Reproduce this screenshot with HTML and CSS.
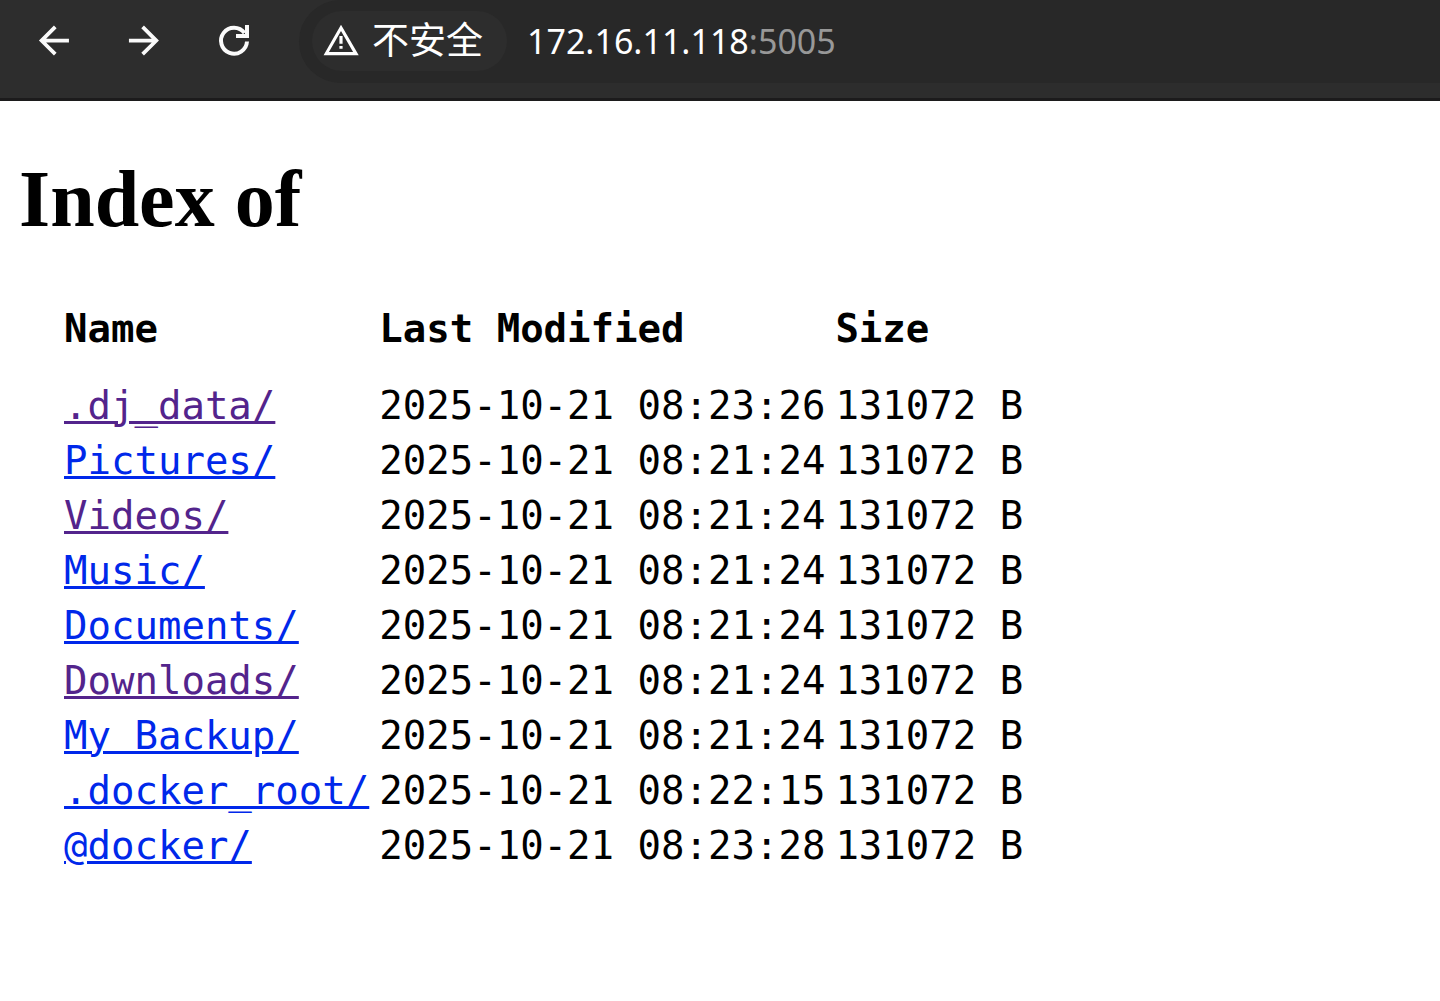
FILE: index.html
```html
<!DOCTYPE html>
<html lang="zh-CN">
<head>
<meta charset="utf-8">
<title>Index of</title>
<link rel="stylesheet" href="styles.css">
</head>
<body>
<header class="toolbar">
  <nav class="nav">
    <button class="nav-button" type="button" aria-label="Back"><svg class="nav-icon" viewBox="0 0 24 24"><path fill="currentColor" d="M19.700 11H7.530l5.590-5.590L11.700 4l-8 8 8 8 1.410-1.410L7.530 13H19.700z"/></svg></button>
    <button class="nav-button" type="button" aria-label="Forward"><svg class="nav-icon" viewBox="0 0 24 24"><path fill="currentColor" d="M3.700 11h12.170l-5.590-5.590L11.700 4l8 8-8 8-1.410-1.410L15.870 13H3.700z"/></svg></button>
    <button class="nav-button" type="button" aria-label="Reload"><svg class="nav-icon" viewBox="0 0 45 45" fill="none" stroke="currentColor" stroke-width="4"><path d="M35 23.5A13 13 0 1 1 32.5 15"/><path d="M35 7V18H24"/></svg></button>
  </nav>
  <div class="omnibox">
    <button class="chip" type="button"><svg class="chip-icon" viewBox="0 0 24 24"><path fill="currentColor" d="M12 5.700L19.630 19H4.370L12 5.700M12 1.700L1 21h22.200L12 1.700zm1 13.500h-2v1.700h2v-1.700zm0-6.400h-2v5h2v-5z"/></svg><span class="chip-label">不安全</span></button>
    <div class="address" role="textbox" aria-label="Address" contenteditable="true" spellcheck="false">172.16.11.118<span class="port">:5005</span></div>
  </div>
</header>
<main class="page">
  <h1 class="title">Index of</h1>
  <table class="listing">
    <thead><tr><th scope="col">Name</th><th scope="col">Last Modified</th><th scope="col">Size</th></tr></thead>
    <tbody>
      <tr><td><a class="visited" href="#dj_data">.dj_data/</a></td><td>2025-10-21 08:23:26</td><td>131072 B</td></tr>
      <tr><td><a href="#pictures">Pictures/</a></td><td>2025-10-21 08:21:24</td><td>131072 B</td></tr>
      <tr><td><a class="visited" href="#videos">Videos/</a></td><td>2025-10-21 08:21:24</td><td>131072 B</td></tr>
      <tr><td><a href="#music">Music/</a></td><td>2025-10-21 08:21:24</td><td>131072 B</td></tr>
      <tr><td><a href="#documents">Documents/</a></td><td>2025-10-21 08:21:24</td><td>131072 B</td></tr>
      <tr><td><a class="visited" href="#downloads">Downloads/</a></td><td>2025-10-21 08:21:24</td><td>131072 B</td></tr>
      <tr><td><a href="#backup">My Backup/</a></td><td>2025-10-21 08:21:24</td><td>131072 B</td></tr>
      <tr><td><a href="#docker_root">.docker_root/</a></td><td>2025-10-21 08:22:15</td><td>131072 B</td></tr>
      <tr><td><a href="#docker">@docker/</a></td><td>2025-10-21 08:23:28</td><td>131072 B</td></tr>
    </tbody>
  </table>
</main>
</body>
</html>
```
FILE: styles.css
```css
* {
  box-sizing: border-box;
}

body {
  margin: 0;
  background: #fff;
  color: #000;
}

.toolbar {
  display: flex;
  align-items: flex-start;
  gap: 42px;
  padding: 0 0 15px 32px;
  background: #2d2d2d;
  border-bottom: 3px solid #1c1b1c;
}

.nav {
  display: flex;
  gap: 45px;
  padding-top: 18px;
}

.nav-button {
  display: flex;
  padding: 0;
  border: 0;
  background: none;
  color: #fafafa;
}

.nav-icon {
  width: 45px;
  height: 45px;
}

.omnibox {
  display: flex;
  flex: 1;
  align-items: center;
  padding: 11px 0 12px 13px;
  background: #282828;
  border-radius: 42px 0 0 42px;
}

.chip {
  display: flex;
  align-items: center;
  gap: 12px;
  height: 60px;
  padding: 0 24px 0 10px;
  border: 0;
  border-radius: 30px;
  background: #2d2d2d;
  color: #fff;
  font-family: "Noto Sans CJK SC", sans-serif;
  font-size: 37px;
  line-height: 54px;
}

.chip-label {
  padding-bottom: 6px;
}

.chip-icon {
  width: 38px;
  height: 38px;
}

.address {
  flex: 1;
  padding-left: 20px;
  color: #fff;
  font-family: "Noto Sans", sans-serif;
  font-size: 34px;
  line-height: 48px;
  white-space: nowrap;
}

.port {
  color: #989898;
}

.page {
  padding: 52px 19px;
}

.title {
  margin: 0 0 56px;
  font-family: "Liberation Serif", serif;
  font-size: 80px;
  line-height: 92px;
}

.listing {
  margin-left: 45px;
  border-collapse: collapse;
  font-family: "DejaVu Sans Mono", monospace;
  font-size: 39px;
  line-height: 55px;
  text-align: left;
  white-space: nowrap;
}

.listing th,
.listing td {
  padding: 0 10px 0 0;
}

.listing th {
  padding-bottom: 22px;
}

.listing a {
  color: #0028ea;
  text-decoration-thickness: 3px;
  text-underline-offset: 2px;
}

.listing .visited {
  color: #53248c;
}
```
